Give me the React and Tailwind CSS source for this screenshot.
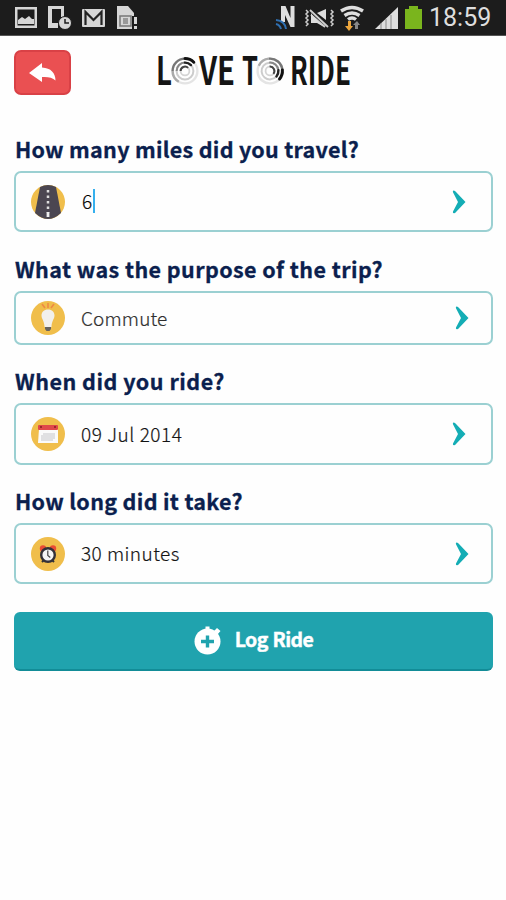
import React, { useState } from 'react';

const StatusBar = () => (
  <div className="h-[36px] bg-[#1c1c1c] border-b border-[#555] flex items-center justify-between pl-[14px] pr-[15px]">
    <svg width="125" height="30" viewBox="0 0 125 30" fill="#d6d6d6">
      {/* Picture */}
      <path fillRule="evenodd" d="M1 4h22v21H1z M3.500 6.500v16h17v-16z" />
      <path d="M4 21v-4l4-3 3 2 4-3 3 3 2 0v5z" />
      {/* Phone with clock */}
      <path fillRule="evenodd" d="M34 3h16v11h-3V6H38v14h6v5H34z" />
      <circle cx="51" cy="20" r="6.500" stroke="#1c1c1c" />
      <path d="M51 16v4h4" fill="none" stroke="#1c1c1c" strokeWidth="1.5" />
      {/* Mail */}
      <rect x="68" y="6" width="23" height="18" rx="1" />
      <path d="M71.500 22V9l8 8 8-8v13" fill="none" stroke="#222" strokeWidth="2.2" />
      {/* Sim card alert */}
      <path d="M103 3h11l6 7v16h-17z" />
      <rect x="106" y="13" width="11" height="10" fill="none" stroke="#777" strokeWidth="1.5" />
      <path d="M109 15h5v6h-5z" fill="#999" />
      <path d="M118 13h6v15h-6z" fill="#1c1c1c" />
      <path d="M120 14h3v7h-3z M120 23h3v3h-3z" />
    </svg>
    <div className="flex items-center">
      <svg width="148" height="30" viewBox="0 0 148 30" fill="#dedede">
        {/* NFC */}
        <path d="M7 3h4.500l5 12V3h4v21h-4L11 12v7H7z" />
        <g fill="none" stroke="#2f6fb0" strokeWidth="2">
          <path d="M2 17q9 1 10 9M2 21q4 1 5 5" />
        </g>
        {/* Vibrate, muted */}
        <g fill="none" stroke="#cfcfcf" strokeWidth="1.5">
          <path d="M32 7l2 2-2 2 2 2-2 2 2 2-2 2 2 2-2 2M57 7l2 2-2 2 2 2-2 2 2 2-2 2 2 2-2 2" />
          <path d="M36 7l18 17M37 12l14 12" strokeWidth="1.8" />
        </g>
        <path d="M43 10l9-4v11z M37 10v10h6l7 4-11-11z" />
        {/* Wifi */}
        <g fill="none" stroke="#dedede" strokeWidth="3.400">
          <path d="M67 8q11-7 22 0M70.500 12.500q7.500-5 15 0M74 16.500q4-3 8 0" />
        </g>
        <path d="M74 18v5h-3l4 5 4-5h-2v-5z" fill="#eda63d" />
        <path d="M81 26v-4h-2l4-4 3 4h-2v4z" fill="#888" />
        {/* Signal */}
        <path d="M101 26L124 4v22z" />
        <path d="M107 20v6M112 16v10M117 12v14" stroke="#888" strokeWidth="1" />
        {/* Battery */}
        <path d="M135 3h9v3h4v20h-17V6h4z" fill="#7ab51d" />
      </svg>
      <span className="ml-[7px] w-[62px] font-[Roboto,sans-serif] text-[25px] leading-[34px] text-[#dedede] whitespace-nowrap">
        18:59
      </span>
    </div>
  </div>
);

// Spiral wheel: thin rings that darken towards the front edge
const Swirl = ({ x, y, rotate }) => (
  <g transform={`translate(${x} ${y}) rotate(${rotate})`} fill="none" strokeWidth="2.4">
    <circle r="12.4" stroke="#e4e4e4" />
    <circle r="8.400" stroke="#ccc" strokeWidth="2" />
    <circle r="4.400" stroke="#d4d4d4" strokeWidth="1.800" />
    <path d="M-12.4 0A12.4 12.4 0 0 1 0-12.4" stroke="#777" />
    <path d="M0-12.4A12.4 12.4 0 0 1 8.8-8.8" stroke="#111" strokeWidth="3" strokeLinecap="round" />
    <path d="M-12.4 0A12.4 12.4 0 0 0-6.200 10.740" stroke="#aaa" />
    <path d="M-8.400 0A8.400 8.400 0 0 1 0-8.400" stroke="#888" strokeWidth="2" />
    <path d="M0-8.400A8.400 8.400 0 0 1 5.940-5.940" stroke="#222" strokeWidth="2.400" strokeLinecap="round" />
    <path d="M-4.400 0A4.400 4.400 0 0 1 3.100-3.100" stroke="#444" strokeWidth="2" />
  </g>
);

const Logo = () => (
  <svg
    width="220"
    height="70"
    viewBox="0 0 220 70"
    fill="#151515"
    fontFamily="'Noto Sans CJK SC', sans-serif"
    fontWeight="700"
    fontSize="38.5"
  >
    <text x="5" y="50" textLength="16" lengthAdjust="spacingAndGlyphs">L</text>
    <text x="48" y="50" textLength="36" lengthAdjust="spacingAndGlyphs">VE</text>
    <text x="91" y="50" textLength="16" lengthAdjust="spacingAndGlyphs">T</text>
    <text x="139" y="50" textLength="61" lengthAdjust="spacingAndGlyphs">RIDE</text>
    <Swirl x={34} y={36} rotate={0} />
    <Swirl x={119} y={36} rotate={85} />
  </svg>
);

const RoadIcon = () => (
  <svg width="34" height="34" viewBox="0 0 34 34">
    <circle cx="17" cy="17" r="17" fill="#f0be4b" />
    <path d="M9 2Q17-2 25 2L30 28Q17 40 4 28z" fill="#4b4651" />
    <path d="M17 5v23" stroke="#ddd" strokeWidth="2.5" strokeDasharray="2.500 3" />
    <path d="M17 27v5" stroke="#eee" strokeWidth="2.800" />
  </svg>
);

const BulbIcon = () => (
  <svg width="34" height="34" viewBox="0 0 34 34">
    <circle cx="17" cy="17" r="17" fill="#f0be4b" />
    <path d="M11 3l3 4M17 2v5M23 3l-3 4" stroke="#ee8a45" strokeWidth="1.6" />
    <path d="M17 8.5c-4 0-6.5 2.6-6.5 6 0 3.500 3 5.500 3 11.500h7c0-6 3-8 3-11.500 0-3.400-2.500-6-6.500-6z" fill="#f2f0ec" />
    <path d="M14 26h6v2l-1.500 2h-3L14 28z" fill="#67645f" />
  </svg>
);

const CalendarIcon = () => (
  <svg width="34" height="34" viewBox="0 0 34 34">
    <circle cx="17" cy="17" r="17" fill="#f0be4b" />
    <path d="M8 12h19v14H7z" fill="#fafafa" />
    <rect x="7" y="8" width="20" height="5" rx="1" fill="#e0484a" />
    <path d="M10 9v2M24 9v2" stroke="#9c282b" strokeWidth="2" />
    <path d="M12 16h12v6h-2v2H10v-6h2z" fill="#e0e0e2" />
  </svg>
);

const ClockIcon = () => (
  <svg width="34" height="34" viewBox="0 0 34 34">
    <circle cx="17" cy="17" r="17" fill="#f0be4b" />
    <circle cx="12" cy="11.500" r="3.200" fill="#e94b35" />
    <circle cx="22" cy="11.500" r="3.200" fill="#e94b35" />
    <path d="M11 25l2-2M23 25l-2-2" stroke="#333" strokeWidth="2" />
    <circle cx="17" cy="18" r="6.800" fill="#f5f5f5" stroke="#333138" strokeWidth="2.400" />
    <path d="M16.800 13.500V18.500l2.500 2" fill="none" stroke="#444" strokeWidth="1.200" />
  </svg>
);

const Chevron = () => (
  <svg width="14" height="24" viewBox="0 0 14 24" fill="#14adb5">
    <path d="M1.500.500Q.300 1 1.100 2.500L6 12 1 21.500Q.500 23.200 1.800 23.300 3 23.500 4 22L13.500 12 4 2Q3 .300 1.500.500z" />
  </svg>
);

const FIELDS = [
  {
    label: 'How many miles did you travel?',
    icon: RoadIcon,
    labelClass: 'tracking-[0.28px]',
    boxClass: 'h-[61px] mb-[21px] pr-[25px]',
    valueClass: 'text-black pl-[1px]',
    editing: true,
  },
  {
    label: 'What was the purpose of the trip?',
    value: 'Commute',
    icon: BulbIcon,
    labelClass: 'tracking-[0.42px]',
    boxClass: 'h-[54px] mb-[20px] pr-[22px]',
    valueClass: 'text-[#333] tracking-[0.15px]',
  },
  {
    label: 'When did you ride?',
    value: '09 Jul 2014',
    icon: CalendarIcon,
    labelClass: 'tracking-[0.5px]',
    boxClass: 'h-[62px] mb-[20px] pr-[25px]',
    valueClass: 'text-[#111] tracking-[0.55px]',
  },
  {
    label: 'How long did it take?',
    value: '30 minutes',
    icon: ClockIcon,
    labelClass: 'tracking-[0.32px]',
    boxClass: 'h-[61px] mb-[28px] pr-[22px]',
    valueClass: 'text-[#111] tracking-[0.45px]',
  },
];

const Field = ({ field, miles }) => {
  const Icon = field.icon;
  return (
    <div>
      <h2 className={`h-[38px] pl-[1px] leading-[31px] text-[21.5px] font-bold text-[#0b1f4e] whitespace-nowrap [-webkit-text-stroke:0.3px_#0b1f4e] ${field.labelClass}`}>
        {field.label}
      </h2>
      <div className={`flex items-center border-2 border-[#9bd0d2] rounded-[7px] pl-[15px] ${field.boxClass}`}>
        <Icon />
        <div className={`ml-[16px] -mt-[1px] flex-1 flex items-center font-light text-[19px] leading-[28px] whitespace-nowrap [-webkit-text-stroke:0.2px_#222] ${field.valueClass}`}>
          {field.editing ? miles : field.value}
          {field.editing && <span className="ml-[1px] w-[2px] h-[24px] bg-[#35b0ee]" />}
        </div>
        <Chevron />
      </div>
    </div>
  );
};

export default function App() {
  const [miles] = useState('6');

  return (
    <div className="w-[506px] h-[900px] bg-[#fefefe] overflow-hidden font-['Noto_Sans_CJK_SC',sans-serif]">
      <StatusBar />

      <header className="flex items-start pl-[14px] pt-[14px] h-[97px]">
        <button className="w-[57px] h-[45px] rounded-[7px] bg-[#ea5052] border-2 border-[#d94146] flex items-center justify-center">
          <svg width="27" height="20" viewBox="0 0 27 20" fill="#fff">
            <path d="M0 10L13 0v4.500C22 5 26.500 10 26.500 17.500c-3-3-8-4-13.500-3.500v5z" />
          </svg>
        </button>
        <div className="ml-[80px] -mt-[15px]">
          <Logo />
        </div>
      </header>

      <main className="pl-[14px] pr-[13px]">
        {FIELDS.map((field) => (
          <Field key={field.label} field={field} miles={miles} />
        ))}

        <button className="w-full h-[59px] rounded-[6px] bg-[#20a3ae] border-b-2 border-[#128c97] flex items-center justify-center pb-[1px] text-white">
          <svg width="27" height="30" viewBox="0 0 27 30" className="mr-[14px]">
            <circle cx="13.500" cy="16.500" r="13" fill="#fff" />
            <path d="M11.500 1.500h4v4h-4zM20 6l3-3 3.500 3-3 3.500z" fill="#fff" />
            <path d="M13.500 10.500v12M7 16.500h13" stroke="#20a3ae" strokeWidth="3.400" />
          </svg>
          <span className="-mt-[2px] text-[19.5px] leading-[28px] font-bold tracking-[-0.6px] [word-spacing:1px] [-webkit-text-stroke:0.4px_#fff]">Log Ride</span>
        </button>
      </main>
    </div>
  );
}
